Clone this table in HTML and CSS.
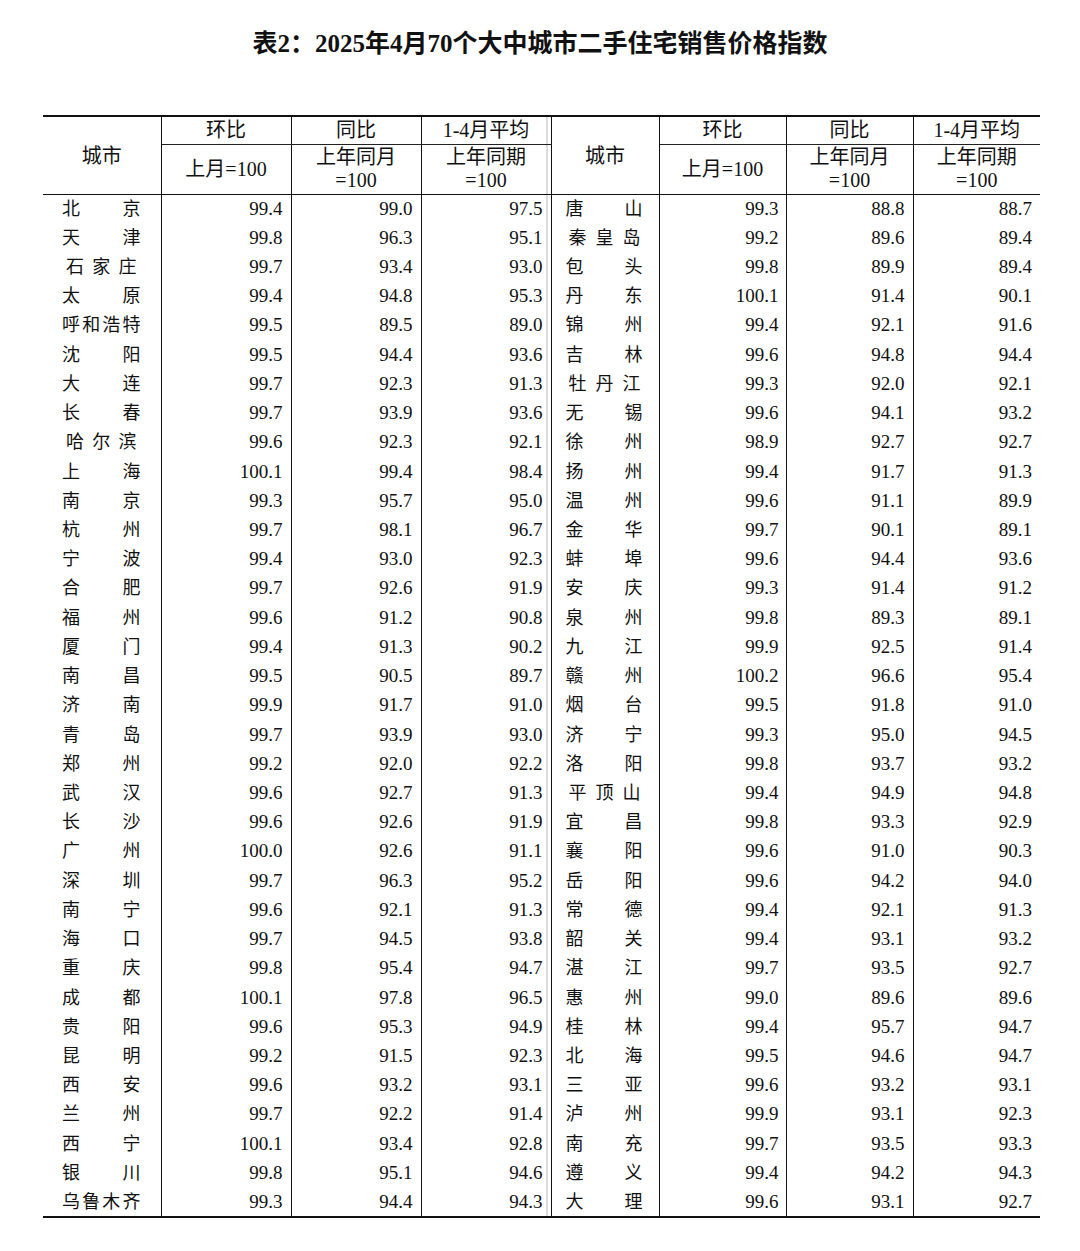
FILE: index.html
```html
<!DOCTYPE html>
<html lang="zh-CN">
<head>
<meta charset="utf-8">
<title>表2：2025年4月70个大中城市二手住宅销售价格指数</title>
<link rel="stylesheet" href="styles.css">
</head>
<body>
<h1 class="title">表2：2025年4月70个大中城市二手住宅销售价格指数</h1>
<div class="wrap">
<table class="idx">
<colgroup>
<col class="c-city-l"><col class="c-num-l"><col class="c-num-l"><col class="c-num-l">
<col class="c-city-r"><col class="c-num-r"><col class="c-num-r"><col class="c-num-r">
</colgroup>
<thead>
<tr class="h1">
<th rowspan="2" class="hcity">城市</th>
<th class="hn">环比</th><th class="hn">同比</th><th class="hn sep">1-4月平均</th>
<th rowspan="2" class="hcity">城市</th>
<th class="hn">环比</th><th class="hn">同比</th><th class="hn last">1-4月平均</th>
</tr>
<tr class="h2">
<th class="hn">上月=100</th><th class="hn">上年同月<br>=100</th><th class="hn sep">上年同期<br>=100</th>
<th class="hn">上月=100</th><th class="hn">上年同月<br>=100</th><th class="hn last">上年同期<br>=100</th>
</tr>
</thead>
<tbody>
<tr><td class="cl"><div class="nm"><span>北</span><span>京</span></div></td><td>99.4</td><td>99.0</td><td class="sep">97.5</td><td class="cr"><div class="nm"><span>唐</span><span>山</span></div></td><td class="r1">99.3</td><td>88.8</td><td class="last">88.7</td></tr>
<tr><td class="cl"><div class="nm"><span>天</span><span>津</span></div></td><td>99.8</td><td>96.3</td><td class="sep">95.1</td><td class="cr"><div class="nm n3"><span>秦</span><span>皇</span><span>岛</span></div></td><td class="r1">99.2</td><td>89.6</td><td class="last">89.4</td></tr>
<tr><td class="cl"><div class="nm n3"><span>石</span><span>家</span><span>庄</span></div></td><td>99.7</td><td>93.4</td><td class="sep">93.0</td><td class="cr"><div class="nm"><span>包</span><span>头</span></div></td><td class="r1">99.8</td><td>89.9</td><td class="last">89.4</td></tr>
<tr><td class="cl"><div class="nm"><span>太</span><span>原</span></div></td><td>99.4</td><td>94.8</td><td class="sep">95.3</td><td class="cr"><div class="nm"><span>丹</span><span>东</span></div></td><td class="r1">100.1</td><td>91.4</td><td class="last">90.1</td></tr>
<tr><td class="cl"><div class="nm"><span>呼</span><span>和</span><span>浩</span><span>特</span></div></td><td>99.5</td><td>89.5</td><td class="sep">89.0</td><td class="cr"><div class="nm"><span>锦</span><span>州</span></div></td><td class="r1">99.4</td><td>92.1</td><td class="last">91.6</td></tr>
<tr><td class="cl"><div class="nm"><span>沈</span><span>阳</span></div></td><td>99.5</td><td>94.4</td><td class="sep">93.6</td><td class="cr"><div class="nm"><span>吉</span><span>林</span></div></td><td class="r1">99.6</td><td>94.8</td><td class="last">94.4</td></tr>
<tr><td class="cl"><div class="nm"><span>大</span><span>连</span></div></td><td>99.7</td><td>92.3</td><td class="sep">91.3</td><td class="cr"><div class="nm n3"><span>牡</span><span>丹</span><span>江</span></div></td><td class="r1">99.3</td><td>92.0</td><td class="last">92.1</td></tr>
<tr><td class="cl"><div class="nm"><span>长</span><span>春</span></div></td><td>99.7</td><td>93.9</td><td class="sep">93.6</td><td class="cr"><div class="nm"><span>无</span><span>锡</span></div></td><td class="r1">99.6</td><td>94.1</td><td class="last">93.2</td></tr>
<tr><td class="cl"><div class="nm n3"><span>哈</span><span>尔</span><span>滨</span></div></td><td>99.6</td><td>92.3</td><td class="sep">92.1</td><td class="cr"><div class="nm"><span>徐</span><span>州</span></div></td><td class="r1">98.9</td><td>92.7</td><td class="last">92.7</td></tr>
<tr><td class="cl"><div class="nm"><span>上</span><span>海</span></div></td><td>100.1</td><td>99.4</td><td class="sep">98.4</td><td class="cr"><div class="nm"><span>扬</span><span>州</span></div></td><td class="r1">99.4</td><td>91.7</td><td class="last">91.3</td></tr>
<tr><td class="cl"><div class="nm"><span>南</span><span>京</span></div></td><td>99.3</td><td>95.7</td><td class="sep">95.0</td><td class="cr"><div class="nm"><span>温</span><span>州</span></div></td><td class="r1">99.6</td><td>91.1</td><td class="last">89.9</td></tr>
<tr><td class="cl"><div class="nm"><span>杭</span><span>州</span></div></td><td>99.7</td><td>98.1</td><td class="sep">96.7</td><td class="cr"><div class="nm"><span>金</span><span>华</span></div></td><td class="r1">99.7</td><td>90.1</td><td class="last">89.1</td></tr>
<tr><td class="cl"><div class="nm"><span>宁</span><span>波</span></div></td><td>99.4</td><td>93.0</td><td class="sep">92.3</td><td class="cr"><div class="nm"><span>蚌</span><span>埠</span></div></td><td class="r1">99.6</td><td>94.4</td><td class="last">93.6</td></tr>
<tr><td class="cl"><div class="nm"><span>合</span><span>肥</span></div></td><td>99.7</td><td>92.6</td><td class="sep">91.9</td><td class="cr"><div class="nm"><span>安</span><span>庆</span></div></td><td class="r1">99.3</td><td>91.4</td><td class="last">91.2</td></tr>
<tr><td class="cl"><div class="nm"><span>福</span><span>州</span></div></td><td>99.6</td><td>91.2</td><td class="sep">90.8</td><td class="cr"><div class="nm"><span>泉</span><span>州</span></div></td><td class="r1">99.8</td><td>89.3</td><td class="last">89.1</td></tr>
<tr><td class="cl"><div class="nm"><span>厦</span><span>门</span></div></td><td>99.4</td><td>91.3</td><td class="sep">90.2</td><td class="cr"><div class="nm"><span>九</span><span>江</span></div></td><td class="r1">99.9</td><td>92.5</td><td class="last">91.4</td></tr>
<tr><td class="cl"><div class="nm"><span>南</span><span>昌</span></div></td><td>99.5</td><td>90.5</td><td class="sep">89.7</td><td class="cr"><div class="nm"><span>赣</span><span>州</span></div></td><td class="r1">100.2</td><td>96.6</td><td class="last">95.4</td></tr>
<tr><td class="cl"><div class="nm"><span>济</span><span>南</span></div></td><td>99.9</td><td>91.7</td><td class="sep">91.0</td><td class="cr"><div class="nm"><span>烟</span><span>台</span></div></td><td class="r1">99.5</td><td>91.8</td><td class="last">91.0</td></tr>
<tr><td class="cl"><div class="nm"><span>青</span><span>岛</span></div></td><td>99.7</td><td>93.9</td><td class="sep">93.0</td><td class="cr"><div class="nm"><span>济</span><span>宁</span></div></td><td class="r1">99.3</td><td>95.0</td><td class="last">94.5</td></tr>
<tr><td class="cl"><div class="nm"><span>郑</span><span>州</span></div></td><td>99.2</td><td>92.0</td><td class="sep">92.2</td><td class="cr"><div class="nm"><span>洛</span><span>阳</span></div></td><td class="r1">99.8</td><td>93.7</td><td class="last">93.2</td></tr>
<tr><td class="cl"><div class="nm"><span>武</span><span>汉</span></div></td><td>99.6</td><td>92.7</td><td class="sep">91.3</td><td class="cr"><div class="nm n3"><span>平</span><span>顶</span><span>山</span></div></td><td class="r1">99.4</td><td>94.9</td><td class="last">94.8</td></tr>
<tr><td class="cl"><div class="nm"><span>长</span><span>沙</span></div></td><td>99.6</td><td>92.6</td><td class="sep">91.9</td><td class="cr"><div class="nm"><span>宜</span><span>昌</span></div></td><td class="r1">99.8</td><td>93.3</td><td class="last">92.9</td></tr>
<tr><td class="cl"><div class="nm"><span>广</span><span>州</span></div></td><td>100.0</td><td>92.6</td><td class="sep">91.1</td><td class="cr"><div class="nm"><span>襄</span><span>阳</span></div></td><td class="r1">99.6</td><td>91.0</td><td class="last">90.3</td></tr>
<tr><td class="cl"><div class="nm"><span>深</span><span>圳</span></div></td><td>99.7</td><td>96.3</td><td class="sep">95.2</td><td class="cr"><div class="nm"><span>岳</span><span>阳</span></div></td><td class="r1">99.6</td><td>94.2</td><td class="last">94.0</td></tr>
<tr><td class="cl"><div class="nm"><span>南</span><span>宁</span></div></td><td>99.6</td><td>92.1</td><td class="sep">91.3</td><td class="cr"><div class="nm"><span>常</span><span>德</span></div></td><td class="r1">99.4</td><td>92.1</td><td class="last">91.3</td></tr>
<tr><td class="cl"><div class="nm"><span>海</span><span>口</span></div></td><td>99.7</td><td>94.5</td><td class="sep">93.8</td><td class="cr"><div class="nm"><span>韶</span><span>关</span></div></td><td class="r1">99.4</td><td>93.1</td><td class="last">93.2</td></tr>
<tr><td class="cl"><div class="nm"><span>重</span><span>庆</span></div></td><td>99.8</td><td>95.4</td><td class="sep">94.7</td><td class="cr"><div class="nm"><span>湛</span><span>江</span></div></td><td class="r1">99.7</td><td>93.5</td><td class="last">92.7</td></tr>
<tr><td class="cl"><div class="nm"><span>成</span><span>都</span></div></td><td>100.1</td><td>97.8</td><td class="sep">96.5</td><td class="cr"><div class="nm"><span>惠</span><span>州</span></div></td><td class="r1">99.0</td><td>89.6</td><td class="last">89.6</td></tr>
<tr><td class="cl"><div class="nm"><span>贵</span><span>阳</span></div></td><td>99.6</td><td>95.3</td><td class="sep">94.9</td><td class="cr"><div class="nm"><span>桂</span><span>林</span></div></td><td class="r1">99.4</td><td>95.7</td><td class="last">94.7</td></tr>
<tr><td class="cl"><div class="nm"><span>昆</span><span>明</span></div></td><td>99.2</td><td>91.5</td><td class="sep">92.3</td><td class="cr"><div class="nm"><span>北</span><span>海</span></div></td><td class="r1">99.5</td><td>94.6</td><td class="last">94.7</td></tr>
<tr><td class="cl"><div class="nm"><span>西</span><span>安</span></div></td><td>99.6</td><td>93.2</td><td class="sep">93.1</td><td class="cr"><div class="nm"><span>三</span><span>亚</span></div></td><td class="r1">99.6</td><td>93.2</td><td class="last">93.1</td></tr>
<tr><td class="cl"><div class="nm"><span>兰</span><span>州</span></div></td><td>99.7</td><td>92.2</td><td class="sep">91.4</td><td class="cr"><div class="nm"><span>泸</span><span>州</span></div></td><td class="r1">99.9</td><td>93.1</td><td class="last">92.3</td></tr>
<tr><td class="cl"><div class="nm"><span>西</span><span>宁</span></div></td><td>100.1</td><td>93.4</td><td class="sep">92.8</td><td class="cr"><div class="nm"><span>南</span><span>充</span></div></td><td class="r1">99.7</td><td>93.5</td><td class="last">93.3</td></tr>
<tr><td class="cl"><div class="nm"><span>银</span><span>川</span></div></td><td>99.8</td><td>95.1</td><td class="sep">94.6</td><td class="cr"><div class="nm"><span>遵</span><span>义</span></div></td><td class="r1">99.4</td><td>94.2</td><td class="last">94.3</td></tr>
<tr><td class="cl"><div class="nm"><span>乌</span><span>鲁</span><span>木</span><span>齐</span></div></td><td>99.3</td><td>94.4</td><td class="sep">94.3</td><td class="cr"><div class="nm"><span>大</span><span>理</span></div></td><td class="r1">99.6</td><td>93.1</td><td class="last">92.7</td></tr>
</tbody>
</table>
</div>
</body>
</html>
```

FILE: styles.css
```css
html, body {
  margin: 0;
  padding: 0;
  background: #fff;
}

body {
  font-family: "Liberation Serif", "Noto Sans CJK SC", serif;
  color: #111;
}

.title {
  margin: 0;
  padding-top: 29px;
  height: 29px;
  line-height: 29px;
  font-size: 25px;
  font-weight: bold;
  text-align: center;
  color: #111;
}

.wrap {
  margin-top: 57px;
  margin-left: 43px;
  width: 996px;
}

.idx {
  width: 996px;
  table-layout: fixed;
  border-collapse: collapse;
  border-top: 2px solid #111;
  border-bottom: 2px solid #111;
  font-size: 19px;
}

.c-city-l { width: 118px; }
.c-num-l { width: 130px; }
.c-city-r { width: 108px; }
.c-num-r { width: 127px; }

.idx th {
  font-weight: normal;
  padding: 0;
  text-align: center;
  vertical-align: middle;
  font-size: 20px;
  line-height: 23px;
}

.idx .h1 { height: 28px; }
.idx .h2 { height: 50px; }

.idx .h1 .hn {
  border-bottom: 1px solid #222;
}

.idx .hcity {
  border-right: 1.5px solid #111;
  border-bottom: 1.5px solid #111;
  font-size: 20px;
  padding-top: 3px;
}

.idx .hn {
  border-right: 1.5px solid #111;
}

.idx .h2 .hn {
  border-bottom: 1.5px solid #111;
}

.idx .hn.last,
.idx td.last {
  border-right: none;
}

.idx tbody tr {
  height: 29.22px;
}

.idx td {
  padding: 0 8px 0 0;
  text-align: right;
  vertical-align: middle;
  border-right: 1.5px solid #111;
  line-height: 22px;
  white-space: nowrap;
}

.idx td.r1 {
  padding-right: 7px;
}

.idx .sep {
  background: linear-gradient(to left, transparent 3px, #b8b8b8 3px, #b8b8b8 4px, transparent 4px);
}

.idx td.cl {
  padding: 0 20px 0 19px;
  font-size: 18px;
}

.idx td.cr {
  padding: 0 16px 0 14px;
  font-size: 18px;
}

.nm {
  display: flex;
  justify-content: space-between;
}

.idx td.cl .n3 {
  padding: 0 4px 0 4px;
}

.idx td.cr .n3 {
  padding: 0 2px 0 3px;
}
```
